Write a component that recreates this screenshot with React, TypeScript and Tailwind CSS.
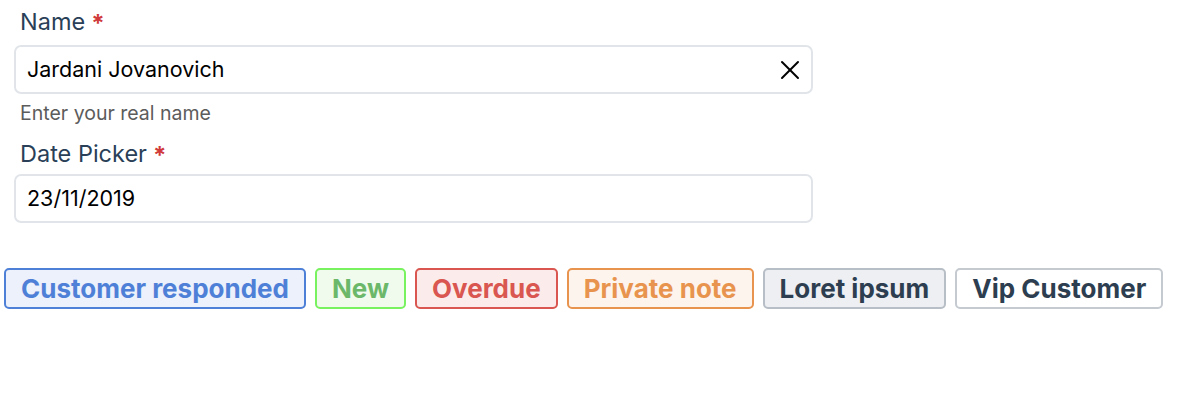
import { X } from "lucide-react"

type Tag = { text: string; className: string }

const tags: Tag[] = [
    { text: "Customer responded", className: "border-[#4f80d8] bg-[#ecf1fb] text-[#4f80d8]" },
    { text: "New", className: "border-[#79f25f] bg-[#f0fbee] text-[#6cb86a]" },
    { text: "Overdue", className: "border-[#d95750] bg-[#fbeceb] text-[#d95750]" },
    { text: "Private note", className: "border-[#e8944f] bg-[#fdf4ed] text-[#e8944f]" },
    { text: "Loret ipsum", className: "border-[#b8bec6] bg-[#edeff2] text-[#2d3e50]" },
    { text: "Vip Customer", className: "border-[#c5cad0] bg-white text-[#2d3e50]" },
]

const Label = ({ text }: { text: string }) => (
    <label className="ml-[6px] flex items-center gap-[6px] text-[23.5px] leading-[30px] text-[#2a3f58]">
        {text}
        <span className="text-[24px] leading-none font-bold text-[#d03a3a] translate-y-[2px]">*</span>
    </label>
)

const App = () => {
    return (
        <div className="w-[1200px] h-[406px] bg-white font-['Inter',sans-serif]">
            <div className="w-[813px] pl-[14px] pt-[7px] flex flex-col">
                <Label text="Name" />
                <div className="mt-[8px] h-[49px] border-2 border-[#e1e5ea] rounded-[7px] pl-[11px] pr-[5px] flex items-center justify-between text-[21.5px] text-black">
                    <span>Jardani Jovanovich</span>
                    <X size={32} strokeWidth={1.5} className="text-black" />
                </div>
                <div className="ml-[6px] mt-[6px] text-[19.5px] leading-[26px] text-[#5c5c5c]">Enter your real name</div>
                <div className="mt-[13px]">
                    <Label text="Date Picker" />
                </div>
                <div className="mt-[5px] h-[49px] border-2 border-[#e1e5ea] rounded-[7px] pl-[11px] flex items-center text-[21.5px] text-black">
                    23/11/2019
                </div>
            </div>
            <div className="mt-[45px] pl-[4px] flex gap-[9px]">
                {tags.map((tag) => (
                    <div key={tag.text} className={`h-[41px] border-2 rounded-[5px] px-[15px] flex items-center text-[26px] font-bold ${tag.className}`}>
                        {tag.text}
                    </div>
                ))}
            </div>
        </div>
    )
}

export default App
